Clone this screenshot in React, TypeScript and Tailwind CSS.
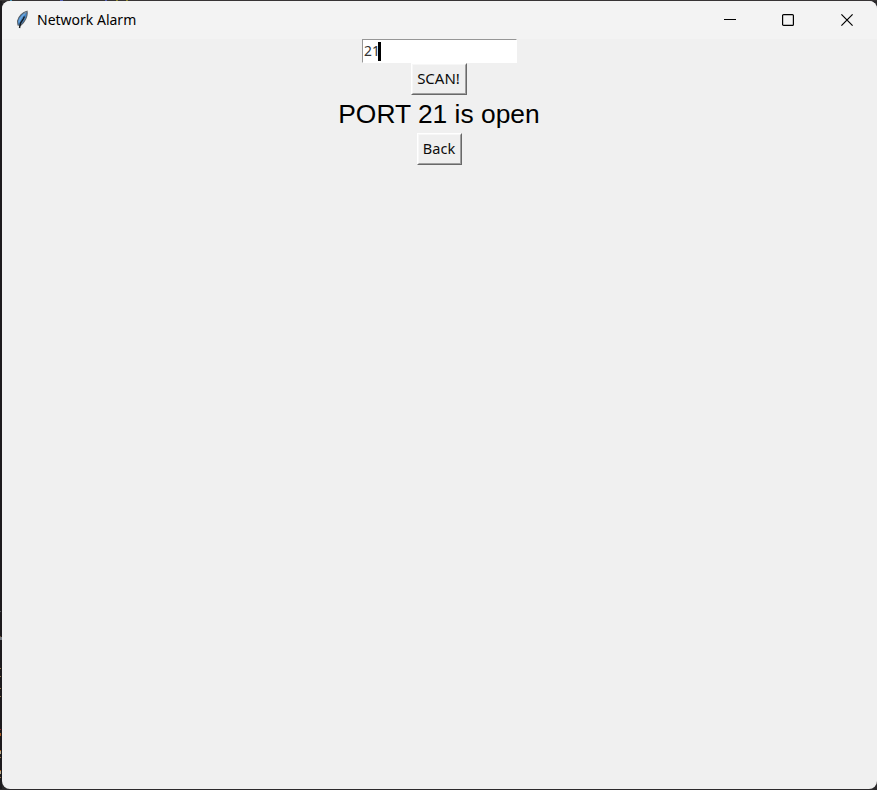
import type { ReactNode } from 'react';

function Feather() {
  return (
    <svg className="block h-5 w-3" viewBox="0 0 12 20" fill="none">
      <path d="M11 1.200C7 2 2.500 6 1.500 11L2 15L4.500 15.500C9 12 12 6 11 1.200Z" fill="#4384c6" stroke="#5a6066" strokeWidth="1.100" />
      <path d="M9 3.500C6 6 3.500 9 3 12.500" stroke="#6fa9e0" strokeWidth="1.500" />
      <path d="M8.500 6.500L7 9.500L4.500 13L3.500 18" stroke="#14181c" strokeWidth="1.400" />
      <path d="M10.300 2L8 4" stroke="#8f969b" strokeWidth="1" />
    </svg>
  );
}

function TkButton({ children, className }: { children: ReactNode; className: string }) {
  return (
    <button
      className={`box-border h-8 shrink-0 border border-t-white border-l-white border-r-[#696969] border-b-[#696969] bg-[#efefef] text-[#0c0c0c] ${className}`}
    >
      <span className="flex h-full w-full items-center justify-center border border-t-[#f7f7f7] border-l-[#f7f7f7] border-r-[#a0a0a0] border-b-[#a0a0a0] pb-[3px] whitespace-nowrap">
        {children}
      </span>
    </button>
  );
}

function TopEdge() {
  return (
    <div className="flex h-px w-full bg-[#373435]">
      <i className="ml-[10px] h-px w-[2px] bg-[#4a93b4]" />
      <i className="ml-[48px] h-px w-[3px] bg-[#5260b4]" />
      <i className="ml-[42px] h-px w-[2px] bg-[#5260b4]" />
      <i className="ml-[9px] h-px w-[2px] bg-[#8d842c]" />
      <i className="ml-[8px] h-px w-[2px] bg-[#8d842c]" />
    </div>
  );
}

function LeftEdge() {
  return (
    <div className="flex h-[788px] w-[2px] shrink-0 flex-col bg-[#1c1a1d]">
      <i className="mt-[610px] h-px w-px bg-[#55585c]" />
      <i className="mt-[24px] h-px w-px bg-[#705030]" />
      <i className="h-[3px] w-[2px] bg-[#777b82]" />
      <i className="mt-[28px] h-px w-px bg-[#94764d]" />
      <i className="mt-[7px] h-px w-px bg-[#94764d]" />
      <i className="mt-[11px] h-px w-px bg-[#94764d]" />
      <i className="mt-[7px] h-px w-px bg-[#94764d]" />
      <i className="mt-[32px] h-px w-px bg-[#8e3030]" />
      <i className="mt-[3px] h-[3px] w-px bg-[#a95c20]" />
      <i className="mt-[14px] h-px w-px bg-[#a95c20]" />
      <i className="h-[3px] w-px bg-[#b4a889]" />
      <i className="mt-[3px] h-px w-px bg-[#94764d]" />
      <i className="mt-[12px] h-px w-px bg-[#a95c20]" />
      <i className="h-[3px] w-px bg-[#b4a889]" />
      <i className="mt-[3px] h-px w-px bg-[#94764d]" />
    </div>
  );
}

export default function App() {
  return (
    <div className="h-[790px] w-[877px] overflow-hidden bg-[#2b292b] font-['Noto_Sans','Open_Sans',sans-serif] text-black">
      <TopEdge />
      <div className="flex h-[788px]">
        <LeftEdge />
        <main className="flex h-[788px] w-[875px] flex-col overflow-hidden rounded-[8px] bg-[#f0f0f0]">
          <header className="flex h-[38px] shrink-0 items-center bg-[#f3f3f3] pl-[14px]">
            <Feather />
            <h1 className="ml-[9px] w-[99px] text-[14px] leading-5 whitespace-nowrap">Network Alarm</h1>
            <div className="ml-auto flex h-full">
              <button className="flex w-[58px] items-center justify-center" aria-label="Minimize">
                <svg className="size-3" viewBox="0 0 12 12" shapeRendering="crispEdges"><path d="M0 5.500H12" stroke="#000" /></svg>
              </button>
              <button className="flex w-[58px] items-center justify-center" aria-label="Maximize">
                <svg className="size-3" viewBox="0 0 12 12" fill="none"><rect x="0.600" y="0.600" width="10.800" height="10.800" rx="1" stroke="#000" strokeWidth="1.200" /></svg>
              </button>
              <button className="flex w-[60px] items-center justify-center" aria-label="Close">
                <svg className="size-3" viewBox="0 0 12 12"><path d="M0.400 0.400L11.600 11.600M11.600 0.400L0.400 11.600" stroke="#000" strokeWidth="1.200" /></svg>
              </button>
            </div>
          </header>
          <section className="flex flex-col items-center">
            <div className="flex h-6 w-[155px] items-center border border-t-[#969696] border-l-[#969696] border-r-white border-b-white bg-white pl-px text-[15px] leading-5">
              <span className="mb-[2px] inline-block w-[14px] origin-left scale-x-[0.92] text-[#333]">21</span>
              <i className="h-[19px] w-[3px] bg-black" />
            </div>
            <TkButton className="mr-px w-14 text-[15px] leading-5">
              <span className="mr-px">SCAN!</span>
            </TkButton>
            <p className="mr-px h-[38px] font-['Liberation_Sans',Arial,sans-serif] text-[26.4px] leading-[38px] whitespace-nowrap">PORT 21 is open</p>
            <TkButton className="w-[45px] text-[14.5px] leading-5">
              <span className="mr-px">Back</span>
            </TkButton>
          </section>
        </main>
      </div>
    </div>
  );
}
